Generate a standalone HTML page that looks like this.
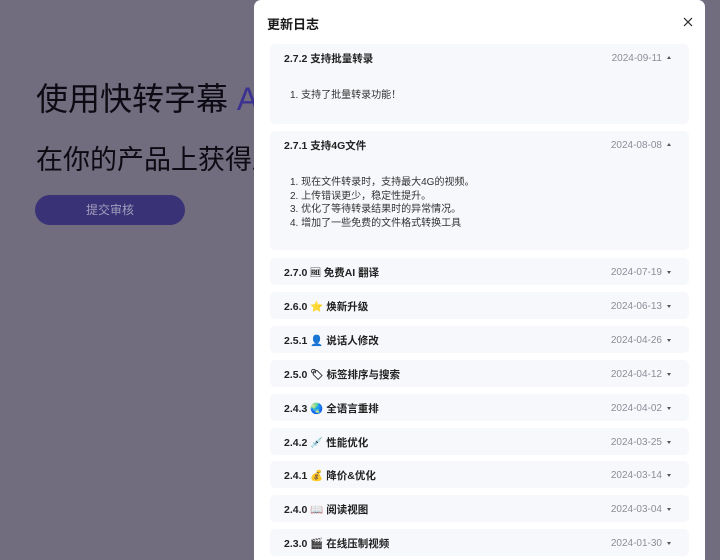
<!DOCTYPE html>
<html><head><meta charset="utf-8"><style>
*{margin:0;padding:0;box-sizing:border-box}
body{width:720px;height:554px;overflow:hidden;background:#716c7e;font-family:"Liberation Sans","Noto Sans CJK SC",sans-serif;position:relative}
.h1{position:absolute;left:36px;top:74px;font-size:32px;color:#0c0a12;white-space:nowrap}
.h1 span{color:#3b3190}
.h2{position:absolute;left:36px;top:138px;font-size:27px;color:#0c0a12;white-space:nowrap}
.btn{position:absolute;left:35px;top:195px;width:150px;height:30px;border-radius:15px;background:#3a3276;color:#a29ebd;font-size:12px;text-align:center;line-height:30px}
.modal{position:absolute;left:254px;top:0;width:451px;height:560px;background:#fff;border-radius:7px 7px 0 0}
.title{position:absolute;left:13px;top:14px;font-size:13px;font-weight:bold;color:#1a1a1a}
.close{position:absolute;left:429px;top:17px;width:10px;height:10px}
.card{position:absolute;left:16px;width:419px;background:#f7f8fc;border-radius:5px}
.hd{position:absolute;left:14px;top:7px;font-size:10.5px;font-weight:bold;color:#222;white-space:nowrap}
.dt{position:absolute;right:27px;top:9px;font-size:10px;color:#8c8c96}
.ar{position:absolute;right:18px;top:13px;width:0;height:0;border-left:2.5px solid transparent;border-right:2.5px solid transparent}
.up{border-bottom:3px solid #555}
.dn{border-top:3px solid #555}
.bd{position:absolute;left:20px;font-size:10px;color:#333;line-height:13.5px}
</style></head><body>
<div class="h1">使用快转字幕 <span>A</span></div>
<div class="h2">在你的产品上获得跟</div>
<div class="btn">提交审核</div>
<div class="modal">
<div class="title">更新日志</div>
<svg class="close" viewBox="0 0 10 10"><path d="M1 1L9 9M9 1L1 9" stroke="#222" stroke-width="1.2"/></svg>
<div class="card" style="top:44px;height:80px"><div class="hd">2.7.2 支持批量转录</div><div class="dt">2024-09-11</div><div class="ar up" style="top:12px"></div><div class="bd" style="top:45px">1. 支持了批量转录功能！</div></div>
<div class="card" style="top:131px;height:119px"><div class="hd">2.7.1 支持4G文件</div><div class="dt">2024-08-08</div><div class="ar up" style="top:12px"></div><div class="bd" style="top:45px">1. 现在文件转录时，支持最大4G的视频。<br>2. 上传错误更少，稳定性提升。<br>3. 优化了等待转录结果时的异常情况。<br>4. 增加了一些免费的文件格式转换工具</div></div>
<div class="card" style="top:258px;height:27px"><div class="hd">2.7.0 🆓 免费AI 翻译</div><div class="dt">2024-07-19</div><div class="ar dn"></div></div>
<div class="card" style="top:292px;height:27px"><div class="hd">2.6.0 ⭐ 焕新升级</div><div class="dt">2024-06-13</div><div class="ar dn"></div></div>
<div class="card" style="top:326px;height:27px"><div class="hd">2.5.1 👤 说话人修改</div><div class="dt">2024-04-26</div><div class="ar dn"></div></div>
<div class="card" style="top:360px;height:27px"><div class="hd">2.5.0 🏷 标签排序与搜索</div><div class="dt">2024-04-12</div><div class="ar dn"></div></div>
<div class="card" style="top:394px;height:27px"><div class="hd">2.4.3 🌏 全语言重排</div><div class="dt">2024-04-02</div><div class="ar dn"></div></div>
<div class="card" style="top:428px;height:27px"><div class="hd">2.4.2 💉 性能优化</div><div class="dt">2024-03-25</div><div class="ar dn"></div></div>
<div class="card" style="top:461px;height:27px"><div class="hd">2.4.1 💰 降价&amp;优化</div><div class="dt">2024-03-14</div><div class="ar dn"></div></div>
<div class="card" style="top:495px;height:27px"><div class="hd">2.4.0 📖 阅读视图</div><div class="dt">2024-03-04</div><div class="ar dn"></div></div>
<div class="card" style="top:529px;height:27px"><div class="hd">2.3.0 🎬 在线压制视频</div><div class="dt">2024-01-30</div><div class="ar dn"></div></div>
</div>
</body></html>
